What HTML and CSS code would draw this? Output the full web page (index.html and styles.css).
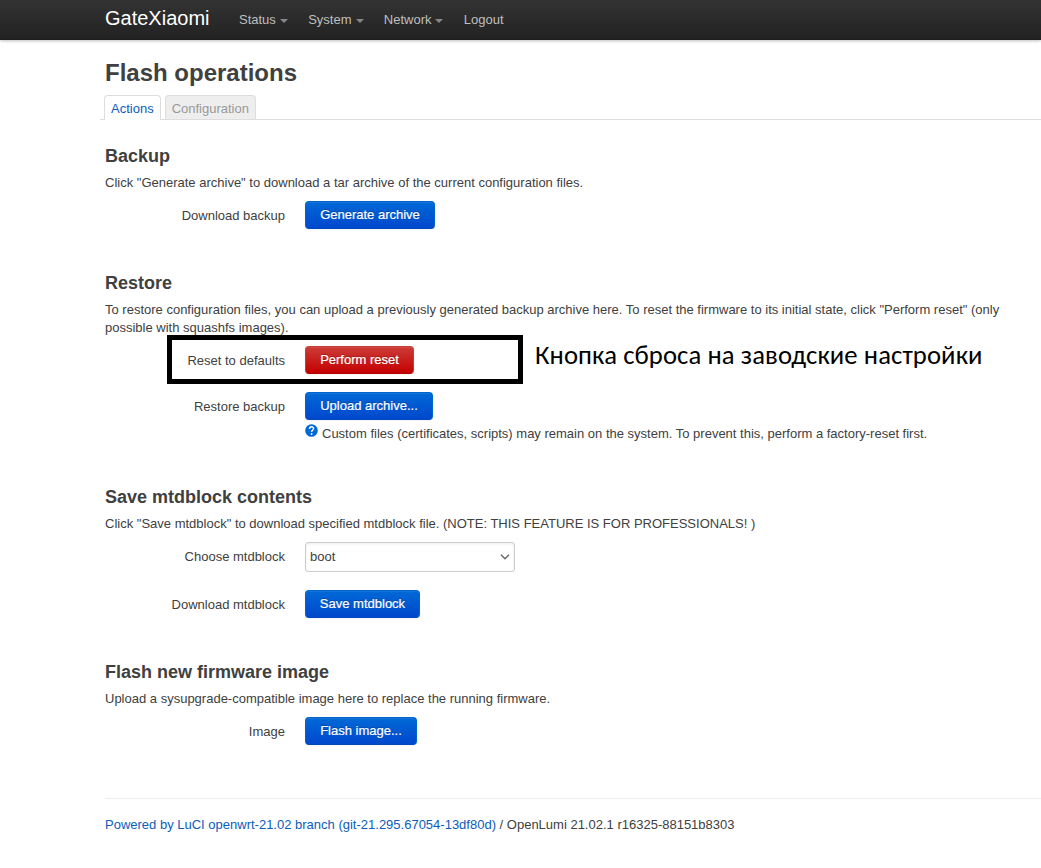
FILE: index.html
```html
<!DOCTYPE html>
<html lang="en">
<head>
<meta charset="utf-8">
<title>GateXiaomi - Flash operations</title>
<link rel="stylesheet" href="styles.css">
</head>
<body>
<header class="topbar">
  <a class="brand">GateXiaomi</a>
  <nav class="nav">
    <a class="menu">Status</a>
    <a class="menu">System</a>
    <a class="menu">Network</a>
    <a>Logout</a>
  </nav>
</header>
<main class="container">
  <h2>Flash operations</h2>
  <ul class="tabs">
    <li class="tab active">Actions</li>
    <li class="tab">Configuration</li>
  </ul>

  <section class="section">
    <h3>Backup</h3>
    <p>Click "Generate archive" to download a tar archive of the current configuration files.</p>
    <div class="row"><label>Download backup</label><button class="btn w130">Generate archive</button></div>
  </section>

  <section class="section">
    <h3>Restore</h3>
    <p>To restore configuration files, you can upload a previously generated backup archive here. To reset the firmware to its initial state, click "Perform reset" (only possible with squashfs images).</p>
    <div class="row marked">
      <label>Reset to defaults</label><button class="btn danger w109">Perform reset</button>
      <div class="frame"></div>
      <div class="note">Кнопка сброса на заводские настройки</div>
    </div>
    <div class="row"><label>Restore backup</label><button class="btn w128">Upload archive...</button></div>
    <div class="hint">
      <svg width="13" height="13" viewBox="0 0 13 13"><circle cx="6.5" cy="6.5" r="6.3" fill="#0069d6"/><path d="M4.5 5C4.5 2.1 8.6 2.2 8.6 4.6C8.6 6.1 6.6 6.1 6.6 8" fill="none" stroke="#fff" stroke-width="1.4"/><circle cx="6.6" cy="10" r=".9" fill="#fff"/></svg>
      <span>Custom files (certificates, scripts) may remain on the system. To prevent this, perform a factory-reset first.</span>
    </div>
  </section>

  <section class="section">
    <h3>Save mtdblock contents</h3>
    <p>Click "Save mtdblock" to download specified mtdblock file. (NOTE: THIS FEATURE IS FOR PROFESSIONALS! )</p>
    <div class="row"><label class="field-label">Choose mtdblock</label>
      <div class="select"><span>boot</span><svg width="10" height="6" viewBox="0 0 10 6"><path d="M1 .8L5 4.8L9 .8" fill="none" stroke="#666" stroke-width="1.4"/></svg></div>
    </div>
    <div class="row"><label>Download mtdblock</label><button class="btn w115">Save mtdblock</button></div>
  </section>

  <section class="section">
    <h3>Flash new firmware image</h3>
    <p>Upload a sysupgrade-compatible image here to replace the running firmware.</p>
    <div class="row"><label>Image</label><button class="btn w112">Flash image...</button></div>
  </section>

  <footer><a>Powered by LuCI openwrt-21.02 branch (git-21.295.67054-13df80d)</a> / OpenLumi 21.02.1 r16325-88151b8303</footer>
</main>
</body>
</html>
```
FILE: styles.css
```css
* { box-sizing: border-box; }
body {
  margin: 0;
  height: 868px;
  overflow: hidden;
  background: #fff;
  color: #404040;
  font: 13px/18px "Liberation Sans", Arial, sans-serif;
}
.topbar {
  height: 40px;
  padding-left: 105px;
  display: flex;
  background: linear-gradient(#333, #222);
  box-shadow: 0 1px 3px rgba(0,0,0,.25), inset 0 -1px 0 rgba(0,0,0,.1);
}
.brand {
  width: 124px;
  color: #fff;
  font-size: 20px;
  line-height: 36px;
}
.nav { display: flex; color: #bfbfbf; line-height: 39px; }
.nav a { padding: 0 10px; height: 39px; }
.nav .menu { display: flex; align-items: center; padding-right: 10.3px; }
.menu::after {
  content: "";
  margin: 2px 0 0 4px;
  border: 4px solid transparent;
  border-top-color: #888;
  border-bottom: 0;
}
.container { width: 940px; margin-left: 105px; padding-top: 14px; }
h2, h3, p, ul { margin: 0; padding: 0; }
h2 { font-size: 24px; line-height: 36px; height: 41px; padding-top: 1px; }
.tabs {
  display: flex;
  gap: 4px;
  height: 25px;
  margin: 0 0 18px -5px;
  padding-left: 4px;
  border-bottom: 1px solid #ddd;
  list-style: none;
}
.tab {
  height: 24px;
  padding: 0 6px;
  border: 1px solid #ddd;
  border-bottom: 0;
  border-radius: 4px 4px 0 0;
  background: #eee;
  color: #999;
  line-height: 25px;
}
.tab.active { height: 25px; background: #fff; color: #0b5dbb; }
.section { margin-bottom: 36px; }
h3 { font-size: 18px; line-height: 36px; }
.row {
  display: flex;
  align-items: center;
  gap: 20px;
  margin-top: 18px;
}
p + .row { margin-top: 9px; }
.row label { width: 180px; text-align: right; padding-top: 1px; }
.row .field-label { padding: 0; }
.btn {
  height: 28px;
  padding: 0 0 1px;
  border: 1px solid #0064cd;
  border-color: #0064cd #0064cd #0048c0;
  border-radius: 4px;
  background: linear-gradient(#0069d6, #0048cd);
  box-shadow: inset 0 1px 0 rgba(255,255,255,.08), 0 1px 2px rgba(0,0,0,.05);
  color: #fff;
  font: 13px/18px "Liberation Sans", Arial, sans-serif;
  text-shadow: 0 -1px 0 rgba(0,0,0,.25);
  -webkit-text-stroke: .2px #fff;
}
.danger { background: linear-gradient(#cc3c38, #c40000); border-color: #c43c35 #c43c35 #b50000; }
.w109 { width: 109px; }
.w112 { width: 112px; }
.w115 { width: 115px; }
.w128 { width: 128px; }
.w130 { width: 130px; }
.marked { position: relative; }
/* Annotation drawn over the reset row */
.frame {
  position: absolute;
  left: 62px;
  top: -11px;
  width: 356px;
  height: 49px;
  border: 5px solid #000;
}
.note {
  position: absolute;
  left: 430px;
  top: -9px;
  color: #000;
  font: 26.67px/36px "Carlito", "Calibri", "Open Sans", "Noto Sans", sans-serif;
  letter-spacing: .1px;
  white-space: nowrap;
}
.hint { display: flex; gap: 4px; margin: 4px 0 0 200px; }
.hint span { padding-top: 1px; }
.section:nth-of-type(2) { margin-bottom: 36px; }
.select {
  display: flex;
  align-items: center;
  justify-content: space-between;
  width: 210px;
  height: 30px;
  padding: 0 4px;
  border: 1px solid #ccc;
  border-radius: 3px;
  box-shadow: inset 0 1px 3px rgba(0,0,0,.08);
}
footer {
  width: 940px;
  margin-top: 53px;
  padding-top: 17px;
  border-top: 1px solid #eee;
  white-space: nowrap;
}
footer a { color: #0b5dbb; }
```
